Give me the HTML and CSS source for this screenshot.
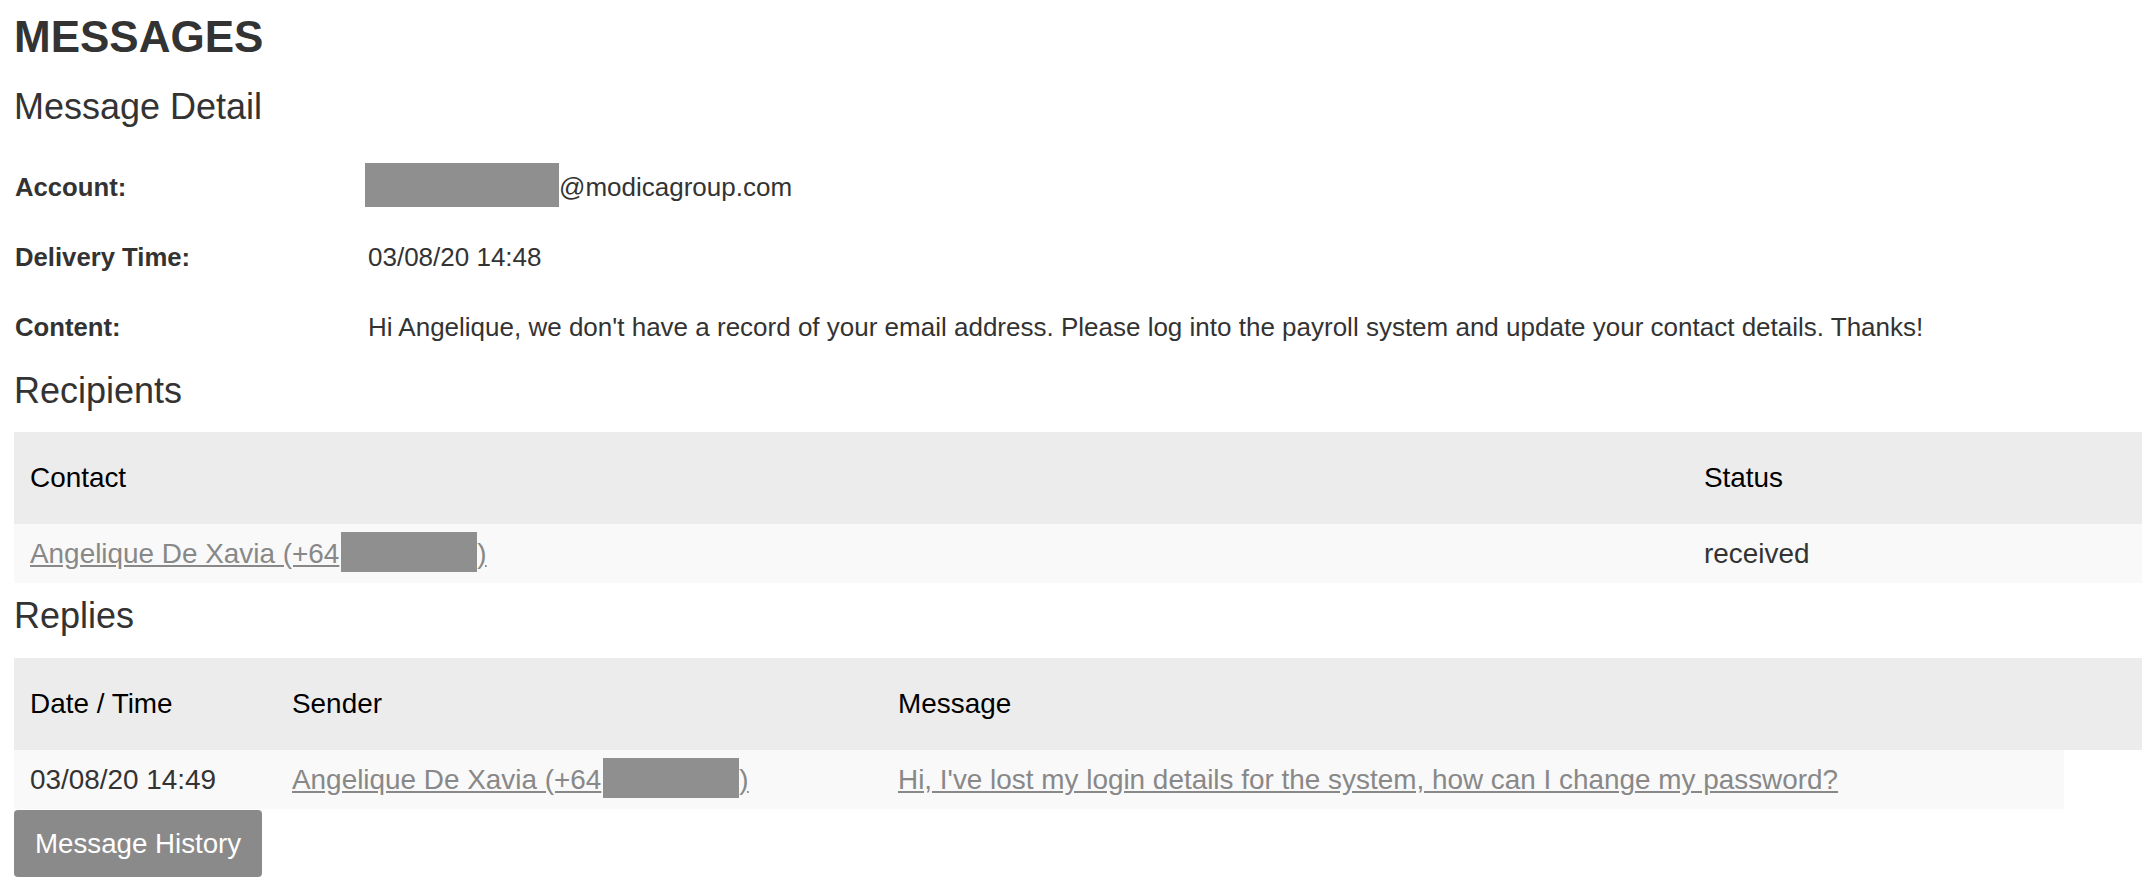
FILE: index.html
```html
<!DOCTYPE html>
<html lang="en">
<head>
<meta charset="utf-8">
<title>Messages</title>
<link rel="stylesheet" href="styles.css">
</head>
<body>
<main class="page">
  <h1 class="page-title">MESSAGES</h1>
  <h2 class="section-title section-title--first">Message Detail</h2>
  <div class="detail">
    <div class="detail-label">Account:</div>
    <div class="detail-value"><span class="redact redact--account"></span>@modicagroup.com</div>
    <div class="detail-label">Delivery Time:</div>
    <div class="detail-value">03/08/20 14:48</div>
    <div class="detail-label">Content:</div>
    <div class="detail-value">Hi Angelique, we don't have a record of your email address. Please log into the payroll system and update your contact details. Thanks!</div>
  </div>

  <h2 class="section-title section-title--recipients">Recipients</h2>
  <table class="grid-table">
    <thead>
      <tr>
        <th class="col-contact">Contact</th>
        <th class="col-status">Status</th>
      </tr>
    </thead>
    <tbody>
      <tr>
        <td><a class="link" href="#">Angelique De Xavia (+64<span class="redact redact--phone"></span>)</a></td>
        <td>received</td>
      </tr>
    </tbody>
  </table>

  <h2 class="section-title section-title--replies">Replies</h2>
  <table class="grid-table">
    <thead>
      <tr>
        <th class="col-date">Date / Time</th>
        <th class="col-sender">Sender</th>
        <th class="col-message">Message</th>
        <th class="col-extra"></th>
      </tr>
    </thead>
    <tbody>
      <tr>
        <td>03/08/20 14:49</td>
        <td><a class="link" href="#">Angelique De Xavia (+64<span class="redact redact--phone"></span>)</a></td>
        <td><a class="link" href="#">Hi, I've lost my login details for the system, how can I change my password?</a></td>
      </tr>
    </tbody>
  </table>

  <button class="btn" type="button">Message History</button>
</main>
</body>
</html>
```

FILE: styles.css
```css
html, body {
  margin: 0;
  padding: 0;
  background: #ffffff;
}

body {
  font-family: "Liberation Sans", Arial, Helvetica, sans-serif;
  color: #333333;
}

.page {
  padding: 0 8px 0 14px;
  width: 2128px;
}

.page-title {
  margin: 13px 0 0;
  font-size: 44px;
  line-height: 48px;
  font-weight: bold;
  color: #333333;
}

.section-title {
  margin: 0;
  font-size: 36px;
  line-height: 40px;
  font-weight: normal;
  color: #333333;
}

.section-title--first {
  margin-top: 26px;
  margin-bottom: 25px;
}

.section-title--recipients {
  margin-top: 9px;
  margin-bottom: 21px;
}

.section-title--replies {
  margin-top: 13px;
  margin-bottom: 22px;
}

.detail {
  display: grid;
  grid-template-columns: 354px 1fr;
  grid-auto-rows: 70px;
  font-size: 26px;
  line-height: 70px;
}

.detail-label {
  font-weight: bold;
  font-size: 25.7px;
  padding-left: 1px;
}

.detail-value {
  display: flex;
  align-items: center;
  white-space: nowrap;
}

.redact {
  display: inline-block;
  background: #8f8f8f;
}

.redact--account {
  width: 194px;
  height: 44px;
  margin-left: -3px;
  margin-top: -4px;
}

.redact--phone {
  width: 136px;
  height: 40px;
  margin-left: 2px;
  vertical-align: middle;
  margin-top: -6px;
}

.grid-table {
  border-collapse: collapse;
  width: 2128px;
  table-layout: fixed;
  font-size: 27.9px;
}

.grid-table th {
  background: #ececec;
  color: #000000;
  font-weight: normal;
  text-align: left;
  height: 92px;
  padding: 0 16px;
  box-sizing: border-box;
  line-height: 40px;
  vertical-align: middle;
}

.grid-table td {
  background: #f9f9f9;
  color: #333333;
  height: 59px;
  padding: 0 16px;
  box-sizing: border-box;
  line-height: 37px;
  vertical-align: middle;
  white-space: nowrap;
}

.col-contact { width: 1674px; }
.col-status { width: 454px; }
.col-date { width: 262px; }
.col-sender { width: 606px; }
.col-message { width: 1182px; }
.col-extra { width: 78px; }

.link {
  color: #888888;
  text-decoration: underline;
}

.btn {
  display: block;
  margin: 1px 0 0;
  padding: 15px 21px;
  border: 0;
  border-radius: 4px;
  background: #8a8a8a;
  color: #ffffff;
  font-family: "Liberation Sans", Arial, Helvetica, sans-serif;
  font-size: 27.7px;
  line-height: 37px;
  cursor: pointer;
}
```
